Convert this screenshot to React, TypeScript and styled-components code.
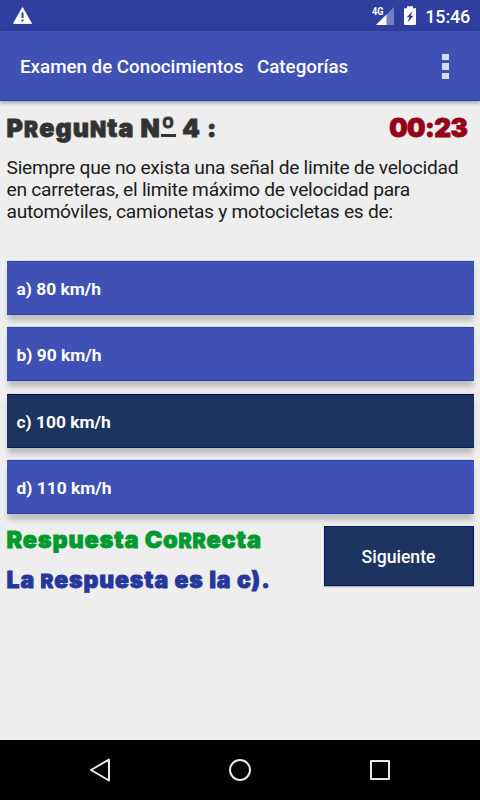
import React from 'react';
import styled, { createGlobalStyle } from 'styled-components';

const Global = createGlobalStyle`
  * { box-sizing: border-box; }
  body { margin: 0; background: #eeeeee; font-family: Roboto, sans-serif; }
`;

const Screen = styled.div`
  width: 480px;
  height: 800px;
  display: flex;
  flex-direction: column;
  background: #eeeeee;
  overflow: hidden;
`;

const StatusBar = styled.header`
  height: 31px;
  flex: none;
  display: flex;
  align-items: flex-start;
  justify-content: space-between;
  padding: 0 10px 0 13px;
  background: #303f9f;
  color: #fff;
`;

const StatusIcons = styled.div`
  display: flex;
  align-items: flex-start;
`;

const Clock = styled.span`
  margin-left: 9px;
  font-size: 18px;
  line-height: 33px;
  font-weight: 500;
  letter-spacing: -0.2px;
`;

const AppBar = styled.nav`
  height: 70px;
  flex: none;
  display: flex;
  align-items: center;
  padding: 2px 31px 0 20px;
  background: #3f51b5;
  border-bottom: 1px solid #2d40b4;
  box-shadow: 0 2px 4px rgba(0, 0, 0, 0.32);
  color: #fff;
`;

const NavItem = styled.span<{ $width: number }>`
  width: ${({ $width }) => $width}px;
  font-size: 18.75px;
  font-weight: 500;
  line-height: 24px;
  white-space: nowrap;
`;

const Overflow = styled.div`
  margin-left: auto;
  width: 7px;
  display: flex;
  flex-direction: column;
  gap: 3px;
`;

const Dot = styled.i`
  height: 6.5px;
  background: #d9dcf0;
`;

const Content = styled.main`
  flex: 1;
  display: flex;
  flex-direction: column;
  padding: 12px 6.5px 0;
`;

const TitleRow = styled.div`
  height: 42px;
  display: flex;
  justify-content: space-between;
  padding-right: 6px;
`;

const Chunky = styled.span<{ $color: string; $size: number; $spacing: number }>`
  font-family: Inter, sans-serif;
  font-weight: 900;
  font-size: ${({ $size }) => $size}px;
  line-height: 30px;
  letter-spacing: ${({ $spacing }) => $spacing}px;
  color: ${({ $color }) => $color};
  -webkit-text-stroke: 0.8px ${({ $color }) => $color};
  white-space: nowrap;
`;

const SmallCap = styled.span`
  font-size: 0.84em;
  text-transform: uppercase;
`;

const Ordinal = styled.span`
  display: inline-block;
  height: 18px;
  font-size: 1.1em;
  line-height: 20px;
  text-decoration: underline;
  text-decoration-thickness: 2.5px;
  text-underline-offset: -3px;
`;

const Question = styled.p`
  margin: 0;
  height: 106.3px;
  padding-top: 2px;
  font-size: 19.2px;
  letter-spacing: -0.26px;
  line-height: 22px;
  color: #1c1c1c;
  white-space: pre;
`;

const Options = styled.div`
  display: flex;
  flex-direction: column;
  gap: 12.3px;
`;

const Option = styled.button<{ $selected: boolean }>`
  height: 53.9px;
  padding: 2px 10px 0;
  border: 0;
  border-top: 1px solid ${({ $selected }) => ($selected ? '#05075a' : '#2642b5')};
  border-bottom: 1px solid ${({ $selected }) => ($selected ? '#05205c' : '#2642b5')};
  background: ${({ $selected }) => ($selected ? '#1d3360' : '#3f51b5')};
  box-shadow: 0 7px 5px -1px rgba(0, 0, 0, 0.2), 0 -1px 2px -1px rgba(0, 0, 0, 0.2);
  color: #fff;
  font: 700 17.4px/24px Roboto, sans-serif;
  text-align: left;
`;

const Footer = styled.div`
  display: flex;
  justify-content: space-between;
  margin-top: 12.6px;
`;

const Result = styled.div`
  display: flex;
  flex-direction: column;
  gap: 9px;
  margin-top: -1px;
`;

const Next = styled.button`
  position: relative;
  width: 150px;
  height: 60px;
  padding: 1px 0 0;
  border: 1px solid #06175a;
  background: #1d3360;
  box-shadow: 0 1px 1px rgba(0, 0, 0, 0.25);
  color: #fff;
  font: 500 17.6px/24px Roboto, sans-serif;
`;

const SystemBar = styled.footer`
  height: 60px;
  flex: none;
  display: flex;
  justify-content: space-between;
  align-items: center;
  padding: 0 86px;
  background: #000;
`;

const specialLetters = /([rnº])/;

function DisplayText({ text, ...rest }: { text: string; $color: string; $size: number; $spacing: number }) {
  return (
    <Chunky {...rest}>
      {text.split(specialLetters).map((part, i) => {
        if (part === 'º') return <Ordinal key={i}>{part}</Ordinal>;
        return specialLetters.test(part) ? <SmallCap key={i}>{part}</SmallCap> : part;
      })}
    </Chunky>
  );
}

const options = ['a) 80 km/h', 'b) 90 km/h', 'c) 100 km/h', 'd) 110 km/h'];

export default function App() {
  return (
    <>
      <Global />
      <Screen>
        <StatusBar>
          <svg width="20" height="31" viewBox="0 0 20 31">
            <path d="M9.5 7.5 18.6 23.5H.4Z" fill="#fff" stroke="#fff" strokeWidth=".8" strokeLinejoin="round" />
            <path d="M8.5 12.5h2V18h-2zM8.5 19.5h2v2h-2z" fill="#303f9f" />
          </svg>
          <StatusIcons>
            <svg width="46" height="31" viewBox="371 0 46 31">
              <path d="M395 7v18h-18Z" fill="#747fbf" />
              <path d="M387.5 14.5V25H377Z" fill="#fff" />
              <text x="373" y="15" fill="#fff" fontFamily="Roboto" fontWeight="700" fontSize="10" textLength="11.5" lengthAdjust="spacingAndGlyphs">4G</text>
              <path d="M408 6.2h6v2h3V24a1 1 0 0 1-1 1h-10a1 1 0 0 1-1-1V8.2h3Z" fill="#fff" />
              <path d="M413.6 11 407.8 17.2h2.7l-1.9 5.2 6-6.6h-2.900Z" fill="#303f9f" />
            </svg>
            <Clock>15:46</Clock>
          </StatusIcons>
        </StatusBar>
        <AppBar>
          <NavItem $width={237}>Examen de Conocimientos</NavItem>
          <NavItem $width={100}>Categorías</NavItem>
          <Overflow><Dot /><Dot /><Dot /></Overflow>
        </AppBar>
        <Content>
          <TitleRow>
            <DisplayText text="Pregunta Nº 4 :" $color="#333333" $size={25} $spacing={1.1} />
            <DisplayText text="00:23" $color="#960018" $size={26} $spacing={-0.5} />
          </TitleRow>
          <Question>{'Siempre que no exista una señal de limite de velocidad\nen carreteras, el limite máximo de velocidad para\nautomóviles, camionetas y motocicletas es de:'}</Question>
          <Options>
            {options.map((option, i) => <Option key={option} $selected={i === 2}>{option}</Option>)}
          </Options>
          <Footer>
            <Result>
              <DisplayText text="Respuesta Correcta" $color="#009a2e" $size={23.5} $spacing={0.8} />
              <DisplayText text="La respuesta es la c)." $color="#26379c" $size={23} $spacing={0.88} />
            </Result>
            <Next>Siguiente</Next>
          </Footer>
        </Content>
        <SystemBar>
          <svg width="28" height="28" viewBox="86 756 28 28" fill="none" stroke="#e8e8e8" strokeWidth="2" strokeLinejoin="round">
            <path d="M109 759.5v21L91 770Z" />
          </svg>
          <svg width="28" height="28" viewBox="0 0 28 28" fill="none" stroke="#e8e8e8" strokeWidth="2">
            <circle cx="14" cy="14" r="10" />
          </svg>
          <svg width="28" height="28" viewBox="0 0 28 28" fill="none" stroke="#e8e8e8" strokeWidth="2" strokeLinejoin="round">
            <path d="M5 5h18v18H5Z" />
          </svg>
        </SystemBar>
      </Screen>
    </>
  );
}
